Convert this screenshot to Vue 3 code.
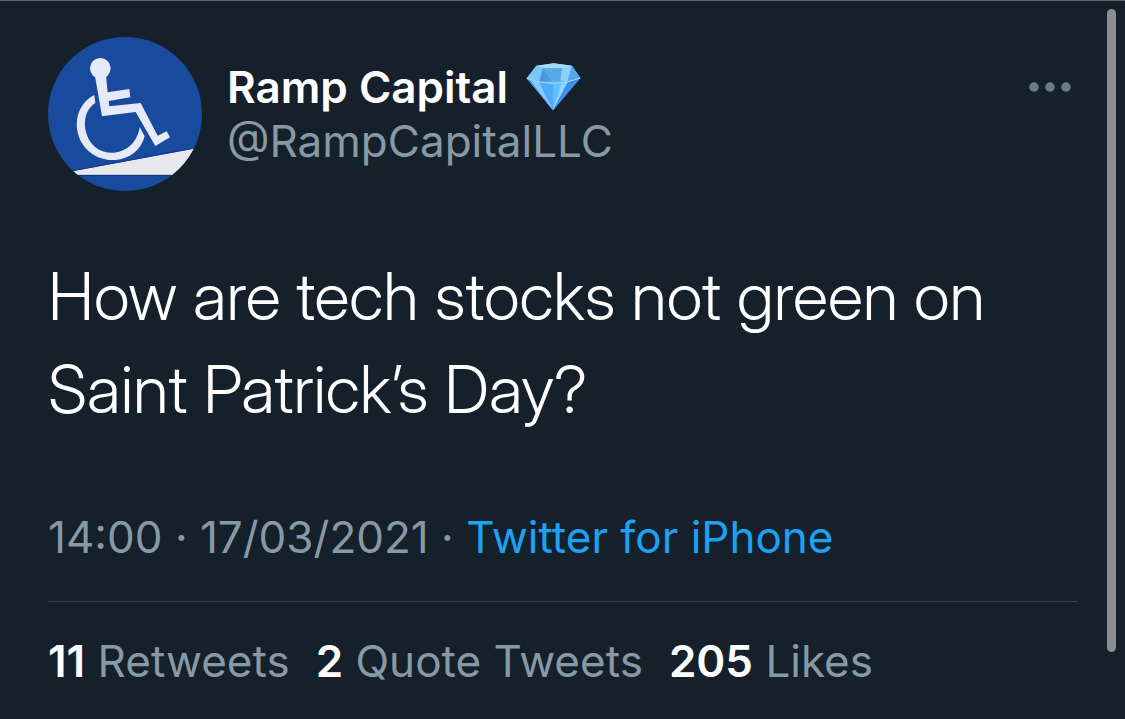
<script setup>
const tweet = {
  name: 'Ramp Capital',
  handle: '@RampCapitalLLC',
  text: 'How are tech stocks not green on Saint Patrick’s Day?',
  time: '14:00',
  date: '17/03/2021',
  source: 'Twitter for iPhone',
}

const stats = [
  { count: 11, label: 'Retweets' },
  { count: 2, label: 'Quote Tweets' },
  { count: 205, label: 'Likes' },
]
</script>

<template>
  <main class="page">
    <article class="tweet">
      <header class="head">
        <a class="avatar" href="#" aria-label="Ramp Capital profile">
          <svg viewBox="24 21 462 462" aria-hidden="true">
            <defs>
              <clipPath id="disc"><circle cx="255" cy="252" r="231" /></clipPath>
            </defs>
            <g clip-path="url(#disc)">
              <rect x="24" y="21" width="462" height="462" fill="#184a9e" />
              <path d="M98 424L486 352V435H98Z" fill="#e6e8ee" />
              <path d="M98 436H486" stroke="#0e3680" stroke-width="3" />
              <path d="M98 422L486 350" stroke="#123c88" stroke-width="3" />
              <circle cx="181" cy="115" r="31" fill="#e6eaf8" />
              <path
                d="M165 138L198 136L203 187L268 177L271 202L206 213L208 229L302 219L353 317L380 304L390 322L346 348L287 246L186 259Z"
                fill="#e6eaf8"
              />
              <path
                d="M163 195L166 219C139 236 130 269 137 302C146 345 181 371 222 368C263 364 293 334 299 291L314 319C303 361 268 387 226 390C171 394 124 359 113 307C103 259 124 214 163 195Z"
                fill="#e6eaf8"
              />
            </g>
          </svg>
        </a>
        <div class="who">
          <h1 class="name">
            <span>{{ tweet.name }}</span>
            <svg class="gem" viewBox="36 40 165 144" role="img" aria-label="Gem">
              <path d="M38 86L67 48L119 41L174 48L199 85L117 182Z" fill="#64b8f8" />
              <path d="M38 86L67 48L84 55L76 94Z" fill="#7cc5f6" />
              <path d="M67 48L119 41L174 48L151 56H88Z" fill="#a9d8f7" />
              <path d="M88 56H145L139 94L76 96Z" fill="#57a9e8" />
              <path d="M88 56L112 94L76 96Z" fill="#4799dc" />
              <path d="M145 56L174 48L160 97L139 92Z" fill="#8ed1fb" />
              <path d="M174 48L199 85L160 97Z" fill="#55a5ef" />
              <path d="M38 86L76 98L117 182Z" fill="#3f94ea" />
              <path d="M48 91L76 98L117 182Z" fill="#83cbfb" />
              <path d="M76 98L118 104V182Z" fill="#4fabf7" />
              <path d="M118 104L160 98L117 182Z" fill="#5fc0ff" />
              <path d="M160 98L199 85L117 182Z" fill="#3d8fee" />
              <path d="M142 102L160 98L117 182Z" fill="#92d5fc" />
              <path d="M38 86Q76 101 118 101T199 85" fill="none" stroke="#a5dbfb" stroke-width="3" />
            </svg>
          </h1>
          <a class="handle" href="#">{{ tweet.handle }}</a>
        </div>
        <button class="more" type="button" aria-label="More">
          <svg viewBox="0 0 42 10" aria-hidden="true">
            <circle cx="5" cy="5" r="4.7" />
            <circle cx="21" cy="5" r="4.7" />
            <circle cx="37" cy="5" r="4.7" />
          </svg>
        </button>
      </header>

      <p class="text">{{ tweet.text }}</p>

      <p class="meta">
        <time>{{ tweet.time }} · {{ tweet.date }}</time> ·
        <a class="source" href="#">{{ tweet.source }}</a>
      </p>

      <nav class="stats" aria-label="Engagement">
        <a v-for="stat in stats" :key="stat.label" class="stat" href="#">
          <strong>{{ stat.count }}</strong> {{ stat.label }}
        </a>
      </nav>
    </article>
    <div class="scroll-thumb" aria-hidden="true"></div>
  </main>
</template>

<style>
body {
  background: #15202a;
}
</style>

<style scoped>
.page {
  position: relative;
  box-sizing: border-box;
  min-height: 100vh;
  padding: 36px 48px 31px;
  border-top: 1px solid #536b78;
  background: #15202a;
  color: #8899a6;
  font-family: Inter, "Liberation Sans", sans-serif;
  font-size: 44px;
  line-height: 54px;
}

a {
  color: inherit;
  text-decoration: none;
}

.head {
  display: flex;
  align-items: center;
  gap: 25px;
}

.avatar,
.avatar svg {
  display: block;
  width: 154px;
  height: 154px;
}

.who {
  flex: 1;
}

.name {
  display: flex;
  align-items: center;
  gap: 18px;
  margin: 0;
  color: #fff;
  font-size: 44px;
  font-weight: 600;
}

.gem {
  width: 55px;
  height: 48px;
}

.handle {
  display: block;
}

.more {
  align-self: flex-start;
  margin: 40px 0 0;
  padding: 5px 6px;
  border: 0;
  background: none;
}

.more svg {
  display: block;
  width: 42px;
  height: 10px;
  fill: #6b7d8c;
}

.text {
  margin: 59px 0 74px;
  color: #fff;
  font-family: "Inter Display", Inter, "Liberation Sans", sans-serif;
  font-size: 66px;
  font-variation-settings: "opsz" 32;
  font-weight: 300;
  line-height: 93px;
}

.meta {
  margin: 0;
  padding-bottom: 37px;
  border-bottom: 1px solid #38444d;
}

.source {
  color: #1da1f2;
}

.stats {
  display: flex;
  flex-wrap: wrap;
  gap: 0 26px;
  margin-top: 32px;
}

.stat strong {
  color: #fff;
  font-weight: 600;
}

.scroll-thumb {
  position: absolute;
  top: 8px;
  right: 9px;
  bottom: 67px;
  width: 9px;
  border-radius: 5px;
  background: #8a8e92;
}
</style>
